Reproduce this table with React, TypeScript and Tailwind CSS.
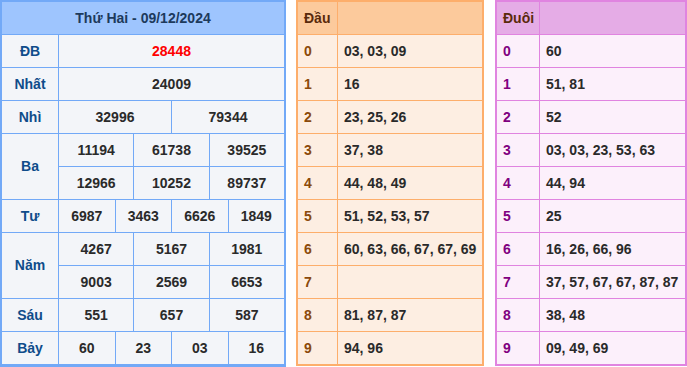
import React from 'react'

const font = { fontFamily: '"Liberation Sans", Arial, sans-serif' }

type Prize = { label: string; rows: string[][] }

const prizes: Prize[] = [
  { label: 'ĐB', rows: [['28448']] },
  { label: 'Nhất', rows: [['24009']] },
  { label: 'Nhì', rows: [['32996', '79344']] },
  { label: 'Ba', rows: [['11194', '61738', '39525'], ['12966', '10252', '89737']] },
  { label: 'Tư', rows: [['6987', '3463', '6626', '1849']] },
  { label: 'Năm', rows: [['4267', '5167', '1981'], ['9003', '2569', '6653']] },
  { label: 'Sáu', rows: [['551', '657', '587']] },
  { label: 'Bảy', rows: [['60', '23', '03', '16']] },
]

const dau = ['03, 03, 09', '16', '23, 25, 26', '37, 38', '44, 48, 49', '51, 52, 53, 57', '60, 63, 66, 67, 67, 69', '', '81, 87, 87', '94, 96']
const duoi = ['60', '51, 81', '52', '03, 03, 23, 53, 63', '44, 94', '25', '16, 26, 66, 96', '37, 57, 67, 67, 87, 87', '38, 48', '09, 49, 69']

const spanClass: Record<number, string> = {
  1: 'col-span-12',
  2: 'col-span-6',
  3: 'col-span-4',
  4: 'col-span-3',
}

const rowSpanClass: Record<number, string> = {
  1: 'row-span-1',
  2: 'row-span-2',
}

function ResultTable() {
  return (
    <div className="w-[286px] shrink-0 border-2 border-[#72a9f7] bg-[#72a9f7] grid grid-cols-[56px_repeat(12,1fr)] auto-rows-[32px] gap-px">
      <div className="col-span-13 bg-[#9ec5fe] flex items-center justify-center text-[14px] font-bold text-[#1d3a5c]">
        Thứ Hai - 09/12/2024
      </div>
      {prizes.map((p) => (
        <React.Fragment key={p.label}>
          <div
            className={`${rowSpanClass[p.rows.length]} bg-[#f3f5f9] flex items-center justify-center text-[14px] font-bold text-[#0f4c8a]`}
          >
            {p.label}
          </div>
          {p.rows.map((row, ri) =>
            row.map((n, ci) => (
              <div
                key={`${ri}-${ci}`}
                className={`${spanClass[row.length]} bg-[#f3f5f9] flex items-center justify-center text-[14px] font-bold ${
                  p.label === 'ĐB' ? 'text-[#ff0000]' : 'text-[#2a2a2a]'
                }`}
              >
                {n}
              </div>
            ))
          )}
        </React.Fragment>
      ))}
    </div>
  )
}

function LotoTable({
  title,
  values,
  width,
  firstCol,
  border,
  head,
  body,
  digit,
}: {
  title: string
  values: string[]
  width: string
  firstCol: string
  border: string
  head: string
  body: string
  digit: string
}) {
  return (
    <div className={`${width} ${border} ${firstCol} shrink-0 border-2 grid auto-rows-[32px] gap-px`}>
      <div className={`${head} flex items-center px-[6px] text-[14px] font-bold text-[#5a2a0c]`}>{title}</div>
      <div className={head}></div>
      {values.map((v, i) => (
        <React.Fragment key={i}>
          <div className={`${body} ${digit} flex items-center px-[6px] text-[14px] font-bold`}>{i}</div>
          <div className={`${body} flex items-center px-[6px] text-[14px] font-bold text-[#2a2a2a] whitespace-nowrap`}>{v}</div>
        </React.Fragment>
      ))}
    </div>
  )
}

export default function App() {
  return (
    <div className="w-[687px] h-[367px] bg-white flex" style={font}>
      <ResultTable />
      <div className="ml-[10px]">
        <LotoTable
          title="Đầu"
          values={dau}
          width="w-[188px]"
          firstCol="grid-cols-[39px_1fr]"
          border="border-[#fdae6b] bg-[#fdae6b]"
          head="bg-[#fcca9c]"
          body="bg-[#fdeee2]"
          digit="text-[#8b4a0b]"
        />
      </div>
      <div className="ml-[11px]">
        <LotoTable
          title="Đuôi"
          values={duoi}
          width="w-[192px]"
          firstCol="grid-cols-[42px_1fr]"
          border="border-[#e084e0] bg-[#e084e0]"
          head="bg-[#e5ace6]"
          body="bg-[#fcf0fb]"
          digit="text-[#800080]"
        />
      </div>
    </div>
  )
}
